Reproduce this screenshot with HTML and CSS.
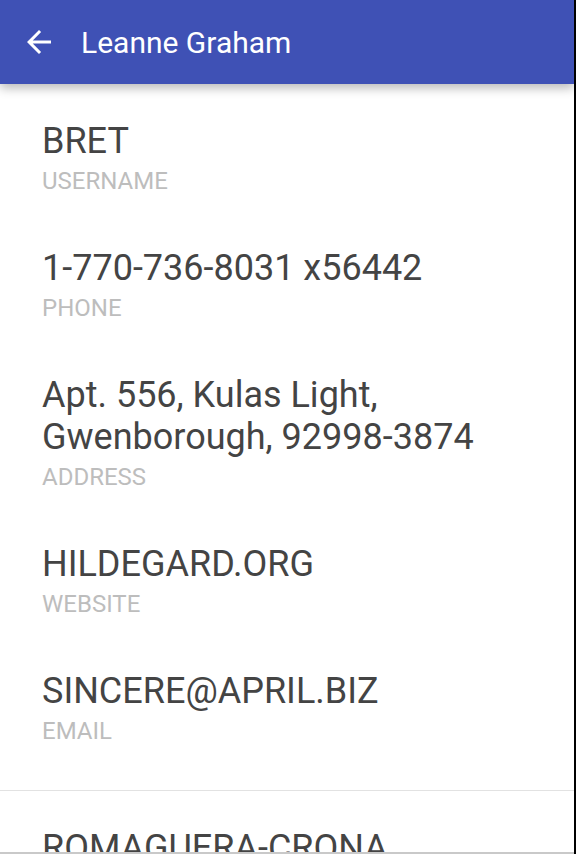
FILE: index.html
```html
<!DOCTYPE html>
<html lang="en">
<head>
<meta charset="utf-8">
<title>Leanne Graham</title>
<link rel="stylesheet" href="styles.css">
</head>
<body>
<div class="frame">
  <div class="screen">
    <header class="appbar">
      <svg class="back" viewBox="0 0 24 24" width="36" height="36" aria-hidden="true">
        <path d="M20 11H7.83l5.59-5.59L12 4l-8 8 8 8 1.41-1.41L7.83 13H20v-2z" fill="#fff"/>
      </svg>
      <h1 class="title">Leanne Graham</h1>
    </header>
    <main class="content">
      <section class="list">
        <div class="item">
          <div class="value">BRET</div>
          <div class="label">USERNAME</div>
        </div>
        <div class="item">
          <div class="value">1-770-736-8031 x56442</div>
          <div class="label">PHONE</div>
        </div>
        <div class="item">
          <div class="value">Apt. 556, Kulas Light,<br>Gwenborough, 92998-3874</div>
          <div class="label">ADDRESS</div>
        </div>
        <div class="item">
          <div class="value">HILDEGARD.ORG</div>
          <div class="label">WEBSITE</div>
        </div>
        <div class="item">
          <div class="value">SINCERE@APRIL.BIZ</div>
          <div class="label">EMAIL</div>
        </div>
      </section>
      <section class="list list-second">
        <div class="item">
          <div class="value">ROMAGUERA-CRONA</div>
          <div class="label">COMPANY</div>
        </div>
      </section>
    </main>
  </div>
  <div class="edge"></div>
</div>
</body>
</html>
```
FILE: styles.css
```css
html, body {
  margin: 0;
  padding: 0;
  background: #fff;
}

.frame {
  display: flex;
  width: 576px;
  height: 854px;
  overflow: hidden;
}

.screen {
  flex: 1;
  display: flex;
  flex-direction: column;
  height: 854px;
  box-sizing: border-box;
  border-bottom: 2px solid #c9c9c9;
  overflow: hidden;
  background: #fff;
  font-family: Roboto, "Noto Sans", sans-serif;
}

.edge {
  width: 2px;
  height: 854px;
  background: #000;
  flex: none;
}

.appbar {
  position: relative;
  z-index: 2;
  flex: none;
  height: 84px;
  background: #3f51b5;
  display: flex;
  align-items: center;
  padding-left: 21px;
  box-shadow: 0 4px 10px rgba(0, 0, 0, 0.28);
}

.back {
  display: block;
  flex: none;
}

.title {
  margin: 2px 0 0 24px;
  font-size: 30px;
  font-weight: 400;
  color: #fff;
  line-height: 36px;
}

.content {
  flex: 1;
  overflow: hidden;
}

.list {
  padding-top: 8px;
  padding-bottom: 21px;
  border-bottom: 1px solid #e2e2e2;
}

.list-second {
  padding-top: 8px;
  border-bottom: none;
}

.item {
  padding: 28px 16px 24px 42px;
}

.value {
  font-size: 36px;
  line-height: 42px;
  color: #444;
}

.label {
  margin-top: 5px;
  font-size: 24px;
  line-height: 28px;
  color: #bdbdbd;
}
```
